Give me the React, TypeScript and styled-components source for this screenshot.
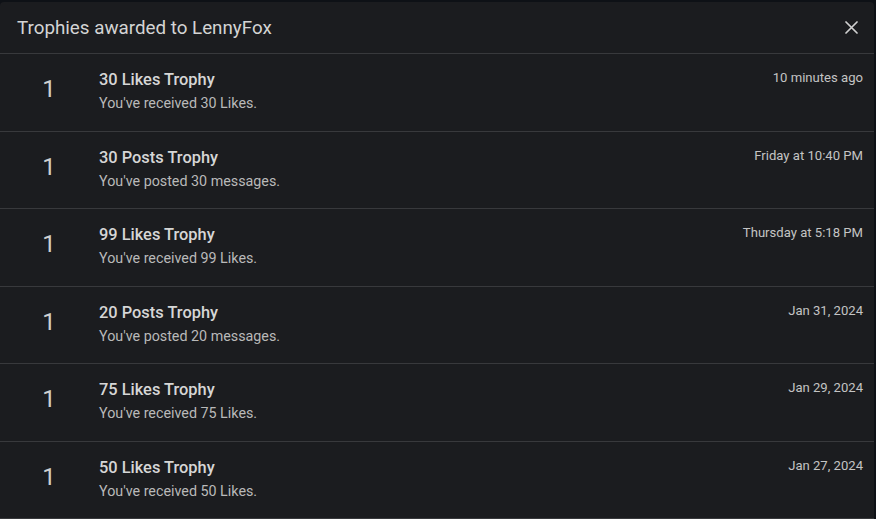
import React from 'react';
import styled, { createGlobalStyle } from 'styled-components';

const GlobalStyle = createGlobalStyle`
  html, body {
    margin: 0;
    padding: 0;
    background: #0e1116;
  }
  body {
    font-family: Roboto, 'Liberation Sans', sans-serif;
    -webkit-font-smoothing: antialiased;
  }
`;

interface Trophy {
  title: string;
  description: string;
  date: string;
}

const trophies: Trophy[] = [
  { title: '30 Likes Trophy', description: "You've received 30 Likes.", date: '10 minutes ago' },
  { title: '30 Posts Trophy', description: "You've posted 30 messages.", date: 'Friday at 10:40 PM' },
  { title: '99 Likes Trophy', description: "You've received 99 Likes.", date: 'Thursday at 5:18 PM' },
  { title: '20 Posts Trophy', description: "You've posted 20 messages.", date: 'Jan 31, 2024' },
  { title: '75 Likes Trophy', description: "You've received 75 Likes.", date: 'Jan 29, 2024' },
  { title: '50 Likes Trophy', description: "You've received 50 Likes.", date: 'Jan 27, 2024' },
];

const Overlay = styled.div`
  width: 876px;
  height: 519px;
  padding-top: 2px;
  box-sizing: border-box;
  overflow: hidden;
`;

const Dialog = styled.div`
  width: 874px;
  background: #1b1c1f;
  border-radius: 4px 4px 0 0;
  overflow: hidden;
`;

const Header = styled.div`
  height: 51px;
  display: flex;
  align-items: center;
  justify-content: space-between;
  padding: 0 15px 0 17px;
  border-bottom: 1px solid #38393c;
`;

const Title = styled.h2`
  margin: 0;
  font-size: 18.8px;
  font-weight: 400;
  color: #d4d4d4;
`;

const CloseButton = styled.button`
  background: none;
  border: 0;
  padding: 0;
  width: 16px;
  height: 16px;
  display: flex;
  align-items: center;
  justify-content: center;
  color: #d0d0d0;
  cursor: pointer;
`;

const List = styled.ul`
  margin: 0;
  padding: 0;
  list-style: none;
`;

const Row = styled.li`
  height: 77.5px;
  box-sizing: border-box;
  display: flex;
  border-bottom: 1px solid #38393c;
`;

const Count = styled.div`
  width: 98px;
  flex-shrink: 0;
  padding-top: 21px;
  text-align: center;
  font-size: 24px;
  line-height: 28px;
  font-weight: 400;
  color: #cfcfcf;
`;

const Body = styled.div`
  flex: 1;
  padding: 16px 0 0 1px;
`;

const Name = styled.div`
  font-size: 16.4px;
  line-height: 20px;
  font-weight: 500;
  color: #d6d6d6;
`;

const Description = styled.div`
  margin-top: 3px;
  font-size: 14.3px;
  line-height: 20px;
  color: #b9b9b9;
`;

const Date = styled.div`
  padding: 16px 11px 0 0;
  font-size: 13.1px;
  line-height: 16px;
  color: #c4c4c4;
`;

const App: React.FC = () => (
  <>
    <GlobalStyle />
    <Overlay>
      <Dialog>
        <Header>
          <Title>Trophies awarded to LennyFox</Title>
          <CloseButton aria-label="Close">
            <svg width="13" height="13" viewBox="0 0 13 13">
              <path d="M1 1L12 12M12 1L1 12" stroke="currentColor" strokeWidth="1.7" strokeLinecap="round" />
            </svg>
          </CloseButton>
        </Header>
        <List>
          {trophies.map(trophy => (
            <Row key={trophy.title}>
              <Count>1</Count>
              <Body>
                <Name>{trophy.title}</Name>
                <Description>{trophy.description}</Description>
              </Body>
              <Date>{trophy.date}</Date>
            </Row>
          ))}
        </List>
      </Dialog>
    </Overlay>
  </>
);

export default App;
